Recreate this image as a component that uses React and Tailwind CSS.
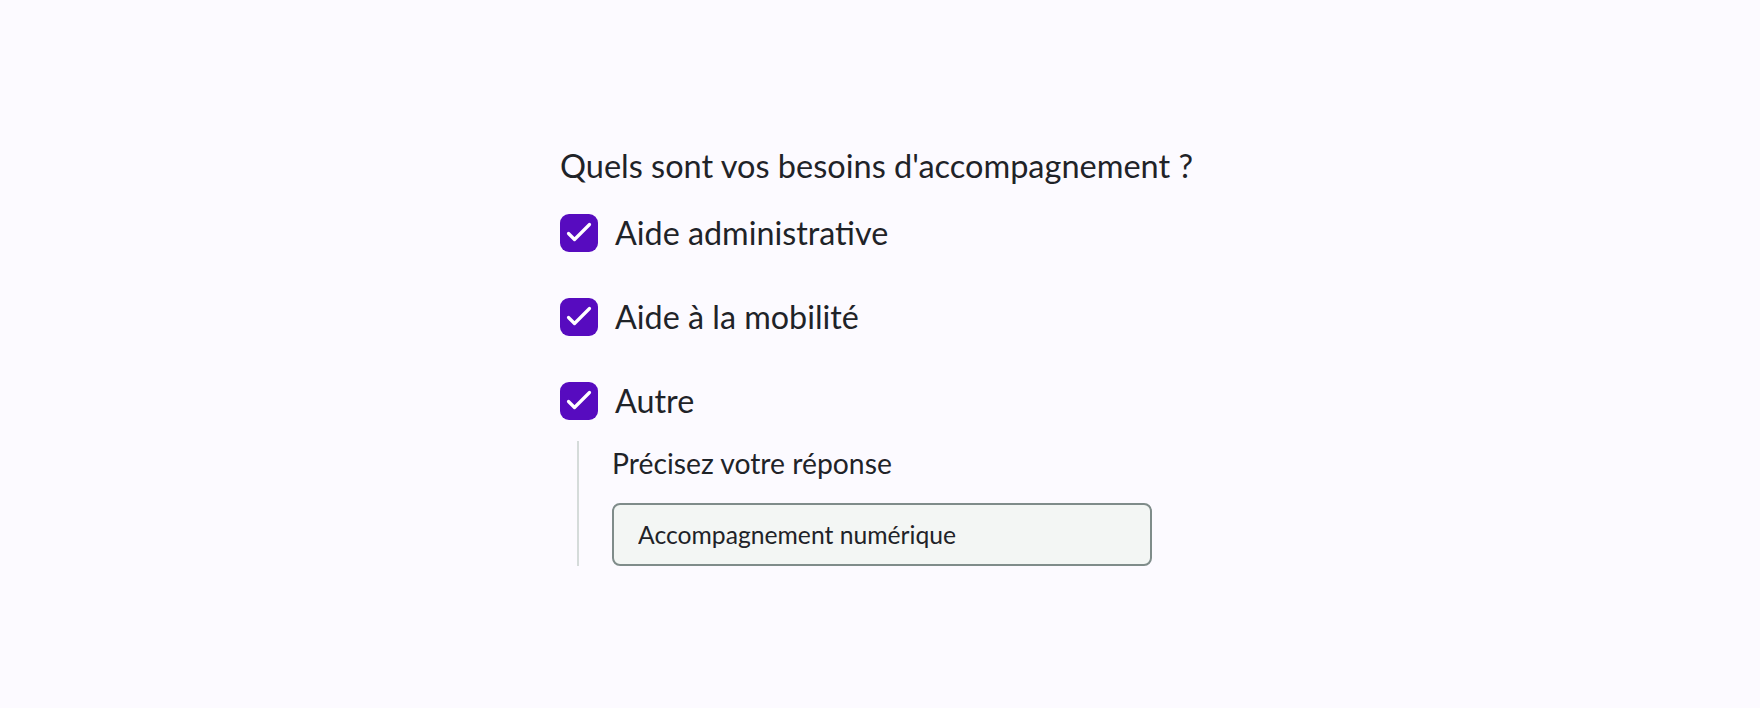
import React, { useState } from "react";

const options = [
  { id: "admin", label: "Aide administrative" },
  { id: "mobilite", label: "Aide à la mobilité" },
  { id: "autre", label: "Autre" },
];

function CheckBox({ checked, onClick }) {
  return (
    <button
      type="button"
      onClick={onClick}
      className={`flex h-[38px] w-[38px] shrink-0 items-center justify-center rounded-[9px] ${
        checked ? "bg-[#570bbf]" : "border-2 border-[#7f8c8a] bg-white"
      }`}
    >
      {checked && (
        <svg width="38" height="38" viewBox="0 0 38 38" fill="none">
          <path
            d="M8.5 19.5l6 6L29.5 10.5"
            stroke="white"
            strokeWidth="3.2"
            strokeLinecap="round"
            strokeLinejoin="round"
          />
        </svg>
      )}
    </button>
  );
}

export default function App() {
  const [checked, setChecked] = useState({ admin: true, mobilite: true, autre: true });
  const [other, setOther] = useState("Accompagnement numérique");

  return (
    <div
      className="min-h-screen bg-[#fcfaff] text-[#1f2328]"
      style={{ fontFamily: "Lato, 'Open Sans', sans-serif" }}
    >
      <div className="mx-auto w-[640px] pt-[146px]">
        <h2 className="text-[32.5px] leading-[40px]">Quels sont vos besoins d'accompagnement ?</h2>

        <div className="mt-[28px] flex flex-col gap-[46px]">
          {options.map((o) => (
            <label key={o.id} className="flex items-center gap-[17px]">
              <CheckBox
                checked={checked[o.id]}
                onClick={() => setChecked({ ...checked, [o.id]: !checked[o.id] })}
              />
              <span className="text-[32.3px] leading-[38px]">{o.label}</span>
            </label>
          ))}
        </div>

        {checked.autre && (
          <div className="ml-[17px] mt-[21px] border-l-2 border-[#d5dbda] pl-[33px]">
            <p className="text-[28.3px] leading-[32px] pt-[6px]">Précisez votre réponse</p>
            <input
              value={other}
              onChange={(e) => setOther(e.target.value)}
              className="mt-[24px] h-[63px] w-[540px] rounded-[8px] border-2 border-[#7f8c8a] bg-[#f3f6f4] px-[24px] text-[24.7px] text-[#1f2328] outline-none"
            />
          </div>
        )}
      </div>
    </div>
  );
}
